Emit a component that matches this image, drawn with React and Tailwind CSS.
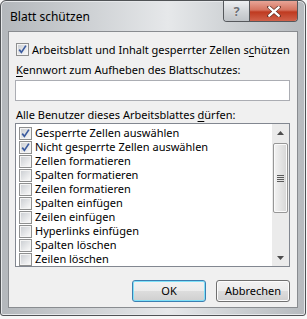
import React from "react";

const items = [
  ["Gesperrte Zellen auswählen", true],
  ["Nicht gesperrte Zellen auswählen", true],
  ["Zellen formatieren", false],
  ["Spalten formatieren", false],
  ["Zeilen formatieren", false],
  ["Spalten einfügen", false],
  ["Zeilen einfügen", false],
  ["Hyperlinks einfügen", false],
  ["Spalten löschen", false],
  ["Zeilen löschen", false],
];

// win7 style checkbox
const Check = ({ checked }) => (
  <span className="relative flex h-[13px] w-[13px] shrink-0 border border-[#8e8f8f] bg-[#f4f4f4] p-[1px]">
    <span className="h-full w-full bg-gradient-to-br from-[#cdd0d4] to-[#f8f8f8]" />
    {checked && (
      <svg className="absolute left-0 top-0" width="11" height="11" viewBox="0 0 11 11">
        <path d="M2.2 5.6 L4.4 8.4 L8.9 1.6" fill="none" stroke="#3b5b9f" strokeWidth="1.7" />
      </svg>
    )}
  </span>
);

const Btn = ({ children, primary }) => (
  <button
    className={
      primary
        ? "flex h-[22px] w-[74px] items-center justify-center rounded-[3px] border border-[#3c7fb1] bg-[linear-gradient(#f2f2f2_0%,#ebebeb_50%,#dddddd_50%,#cfcfcf_100%)] shadow-[inset_0_0_0_1px_#7fe1f9] text-black"
        : "flex h-[22px] w-[74px] items-center justify-center rounded-[3px] border border-[#707070] bg-[linear-gradient(#f2f2f2_0%,#ebebeb_50%,#dddddd_50%,#cfcfcf_100%)] shadow-[inset_0_0_0_1px_#fcfcfc] text-black"
    }
  >
    {children}
  </button>
);

export default function App() {
  return (
    <div className="h-[319px] w-[307px] bg-[#f7f7f7] font-['Segoe_UI','Noto_Sans',sans-serif] text-[11px] leading-[16px] text-black">
      <div className="flex h-[316px] w-[306px] flex-col rounded-t-[6px] rounded-b-[3px] border border-[#505356] bg-[linear-gradient(90deg,#b3b7bb_0%,#cfd2d5_30%,#e6e8ea_55%,#c9cdd0_80%,#b6babe_100%)] px-[7px] pb-[7px] shadow-[inset_0_0_0_1px_#e6e8ea]">
        {/* title bar */}
        <div className="flex h-[30px] shrink-0 items-start justify-between">
          <div className="pl-[2px] pt-[8px] text-[12px]">Blatt schützen</div>
          <div className="flex h-[21px] overflow-hidden rounded-b-[4px] border border-t-0 border-[#55585c]">
            <div className="flex w-[26px] items-center justify-center border-r border-[#55585c] bg-gradient-to-b from-[#eef0f2] via-[#d3d6d9] to-[#bfc3c7] text-[13px] font-bold leading-none text-[#6c7075] [text-shadow:0_0_1px_#fff]">
              ?
            </div>
            <div className="flex w-[47px] items-center justify-center bg-[linear-gradient(#e8a597_0%,#d5735f_45%,#bf3a20_55%,#d0624b_100%)]">
              <svg width="14" height="11" viewBox="0 0 14 11">
                <path
                  d="M2 1 L12 10 M12 1 L2 10"
                  fill="none"
                  stroke="#5a2a20"
                  strokeWidth="3.6"
                  strokeLinecap="round"
                />
                <path d="M2.3 1.3 L11.7 9.7 M11.7 1.3 L2.3 9.7" fill="none" stroke="#fff" strokeWidth="2.4" strokeLinecap="round" />
              </svg>
            </div>
          </div>
        </div>

        {/* client area */}
        <div className="flex flex-1 flex-col border border-[#898c90] bg-[#f0f0f0] pl-[6px] pr-[7px]">
          <div className="ml-[1px] mt-[11px] flex h-[13px] items-center gap-[3px]">
            <Check checked />
            <span>
              Arbeitsblatt und Inhalt gesperrter Zellen s<u className="underline-offset-2">c</u>hützen
            </span>
          </div>

          <div className="ml-[1px] mt-[6px] h-[16px]">
            <u className="underline-offset-2">K</u>ennwort zum Aufheben des Blattschutzes:
          </div>
          <div className="mt-[2px] h-[21px] border border-[#abadb3] bg-white" />

          <div className="ml-[1px] mt-[6px] h-[16px]">
            Alle Benutzer dieses Arbeitsblattes <u className="underline-offset-2">d</u>ürfen:
          </div>

          <div className="flex h-[144px] border border-[#828790] bg-white">
            <div className="flex flex-1 flex-col pt-[2px]">
              {items.map(([label, checked]) => (
                <div key={label} className="flex h-[14px] items-center gap-[3px] pl-[3px] leading-[14px]">
                  <Check checked={checked} />
                  <span>{label}</span>
                </div>
              ))}
            </div>
            {/* scrollbar */}
            <div className="flex w-[17px] flex-col bg-[#ebebeb]">
              <div className="flex h-[17px] items-center justify-center">
                <svg width="7" height="4" viewBox="0 0 7 4">
                  <path d="M0 4 L3.5 0 L7 4 Z" fill="#4d4d4d" />
                </svg>
              </div>
              <div className="mx-[1px] mt-[2px] flex h-[70px] items-center justify-center rounded-[2px] border border-[#979797] bg-gradient-to-r from-[#f3f3f3] to-[#d6d6d6] shadow-[inset_0_0_0_1px_#fafafa]">
                <svg width="7" height="7" viewBox="0 0 7 7">
                  <path d="M0 0.5 H7 M0 2.5 H7 M0 4.5 H7 M0 6.5 H7" stroke="#5a5a5a" strokeWidth="1" />
                </svg>
              </div>
              <div className="flex-1" />
              <div className="flex h-[17px] items-center justify-center">
                <svg width="7" height="4" viewBox="0 0 7 4">
                  <path d="M0 0 L7 0 L3.5 4 Z" fill="#4d4d4d" />
                </svg>
              </div>
            </div>
          </div>

          <div className="mt-[13px] flex justify-end gap-[10px]">
            <Btn primary>OK</Btn>
            <Btn>Abbrechen</Btn>
          </div>
        </div>
      </div>
    </div>
  );
}
